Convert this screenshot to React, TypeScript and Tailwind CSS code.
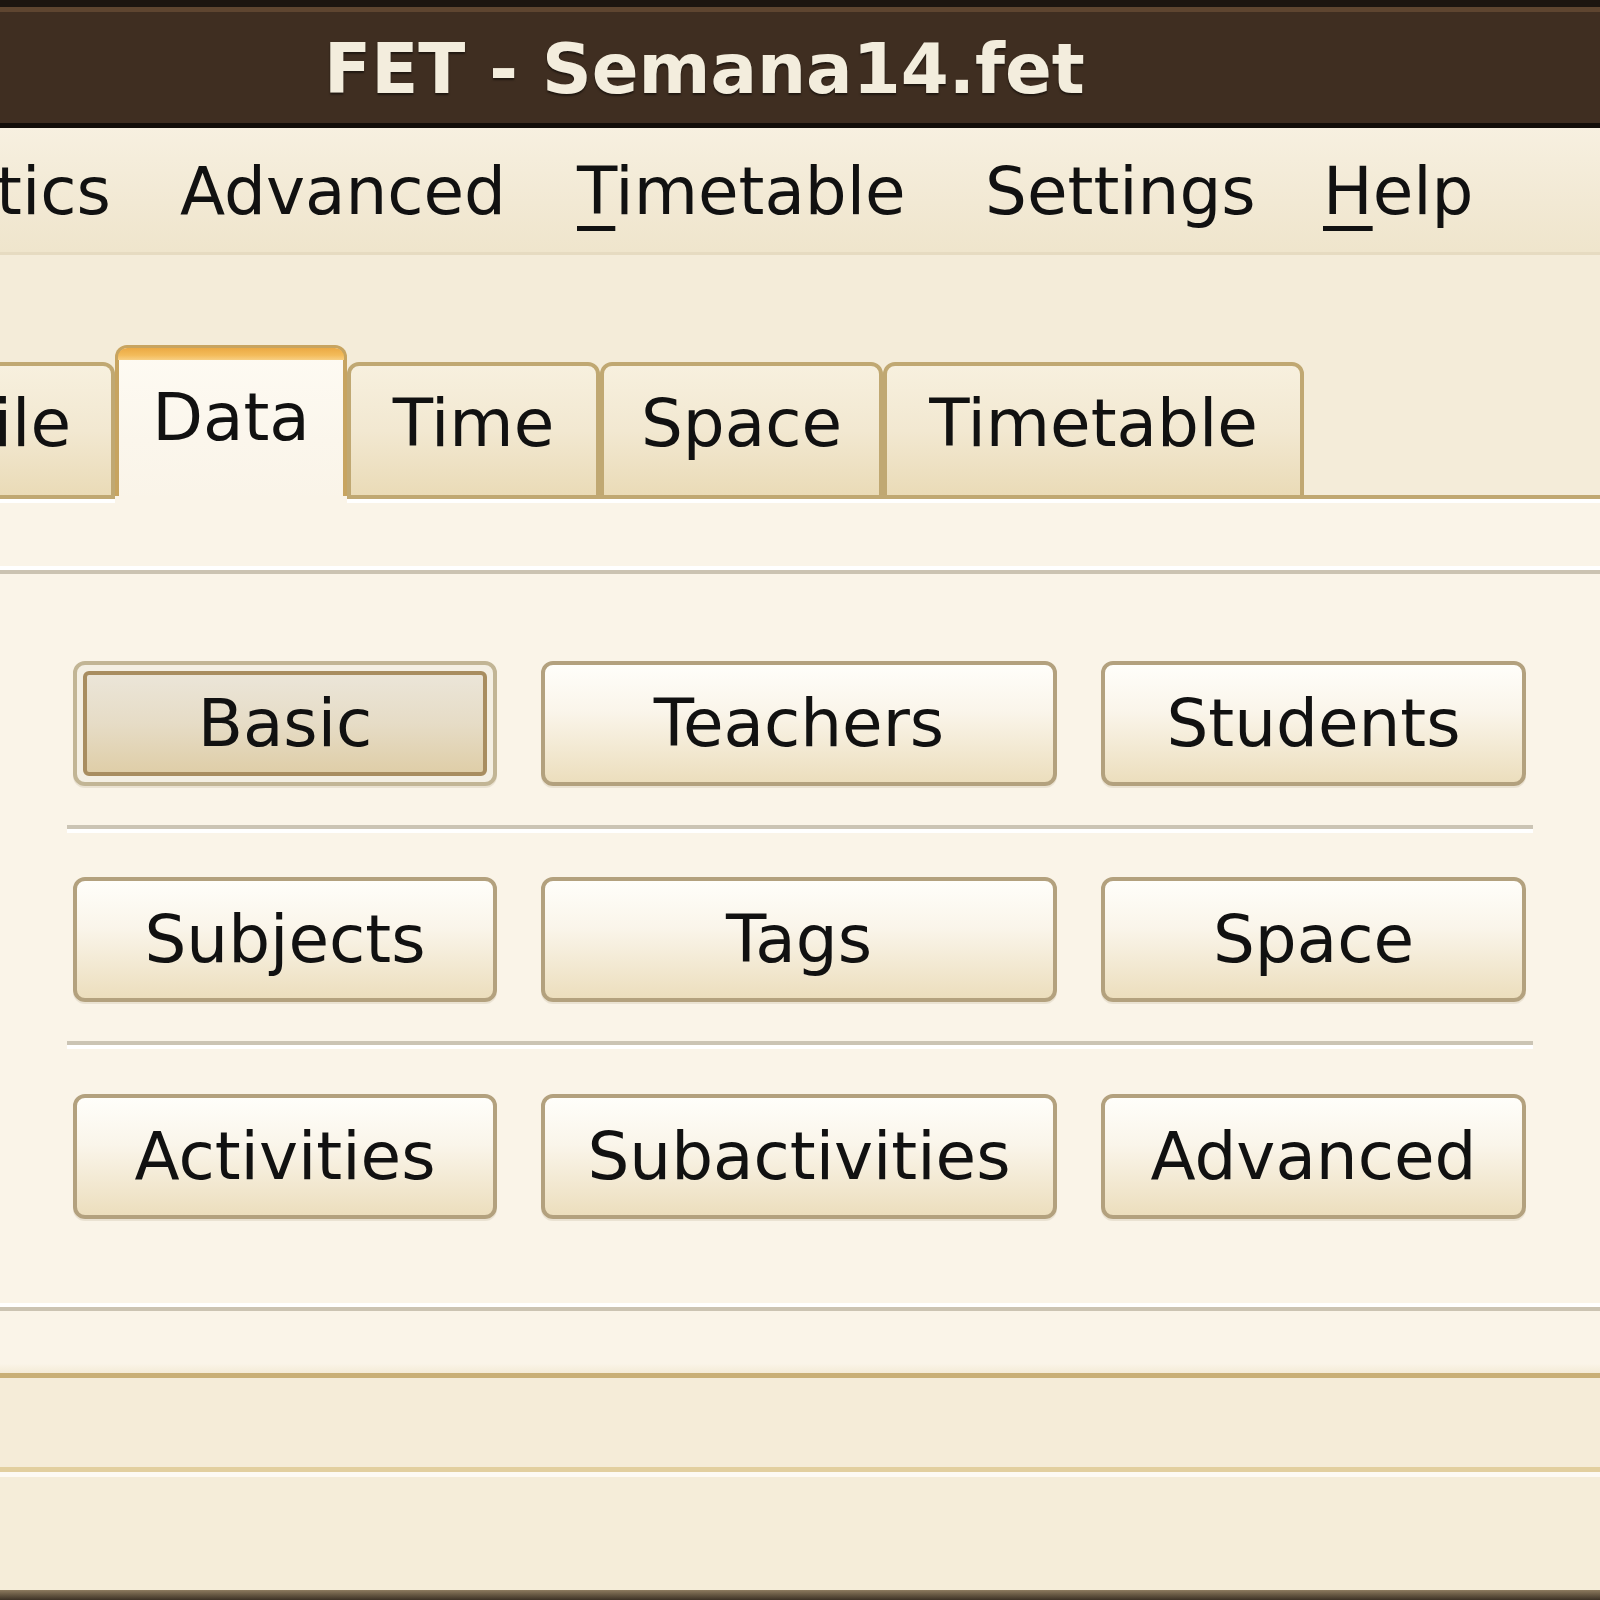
const font = "font-['DejaVu_Sans','Liberation_Sans',sans-serif]";

type ButtonProps = { label: string; focused?: boolean };

const DataButton = ({ label, focused }: ButtonProps) => {
  if (focused) {
    return (
      <div className="h-[125px] rounded-[12px] border-[4px] border-[#c2b595] bg-[#f4efe3] p-[6px] shadow-[0_2px_0_rgba(120,100,60,0.12)]">
        <div className="flex h-full items-center justify-center rounded-[6px] border-[4px] border-[#a88d60] bg-[linear-gradient(to_bottom,#ebe5d8_0%,#e6dcc6_50%,#dfcea8_100%)] text-[66px] leading-none text-[#111111]">
          {label}
        </div>
      </div>
    );
  }
  return (
    <div className="flex h-[125px] items-center justify-center rounded-[12px] border-[4px] border-[#b3a17e] bg-[linear-gradient(to_bottom,#fffefa_0%,#faf5ea_40%,#ecdebd_100%)] text-[66px] leading-none text-[#111111] shadow-[0_2px_0_rgba(120,100,60,0.12)]">
      {label}
    </div>
  );
};

const Separator = () => (
  <div className="-mx-[6px] h-[8px] border-t-[4px] border-[#cbc4b4] bg-white" />
);

const EtchedLine = () => (
  <div className="h-[8px] border-t-[4px] border-white bg-[#cbc3b2]" />
);

const tabBase =
  "flex h-[137px] items-start justify-center rounded-t-[12px] border-x-[4px] border-t-[4px] border-b-[4px] border-[#c0a872] bg-[linear-gradient(to_bottom,#f7f0de_0%,#f2e8d1_50%,#eadbb7_100%)] pt-[25px] text-[66px] leading-none text-[#111111]";

export default function App() {
  return (
    <div className={`flex h-[1600px] w-[1600px] flex-col overflow-hidden bg-[#f4ecd9] ${font}`}>
      {/* window title */}
      <div className="h-[128px] border-t-[7px] border-b-[5px] border-t-[#1c1510] border-b-[#120d09] bg-[#3f2e21]">
        <div className="h-[5px] bg-[#5e4530]" />
        <div className="pl-[324px] pt-[23px] text-[69px] font-bold leading-none text-[#f3eddd] [text-shadow:0_2px_2px_rgba(0,0,0,0.5)]">
          FET - Semana14.fet
        </div>
      </div>

      {/* menu bar */}
      <div className="flex h-[127px] border-b-[3px] border-[#e6dbc1] bg-[linear-gradient(to_bottom,#f7f0e0_0%,#f2e9d4_60%,#efe5cc_100%)] pt-[31px] text-[66px] leading-none text-[#111111]">
        <span className="-ml-[4px] w-[184px]">tics</span>
        <span className="w-[397px]">Advanced</span>
        <span className="w-[408px]">
          <span className="underline decoration-[5px] underline-offset-[12px]">T</span>imetable
        </span>
        <span className="w-[338px]">Settings</span>
        <span>
          <span className="underline decoration-[5px] underline-offset-[12px]">H</span>elp
        </span>
      </div>

      {/* tab bar */}
      <div className="mt-[90px] flex h-[154px] items-end">
        <div className="flex h-[137px] w-[115px] items-start justify-end rounded-tr-[12px] border-t-[4px] border-r-[4px] border-b-[4px] border-[#c0a872] bg-[linear-gradient(to_bottom,#f7f0de_0%,#f2e8d1_50%,#eadbb7_100%)] pr-[40px] pt-[25px] text-[66px] leading-none text-[#111111]">
          ile
        </div>
        <div className="relative z-10 -mb-[4px] flex h-[158px] w-[232px] flex-col rounded-t-[12px] border-x-[4px] border-t-[3px] border-[#c7a460] bg-[linear-gradient(to_bottom,#fefbf3_0%,#fbf6ec_60%,#faf4e8_100%)]">
          <div className="-mx-[1px] h-[12px] rounded-t-[9px] bg-[linear-gradient(to_bottom,#eba944_0%,#f3bb5a_60%,#f8cf83_100%)]" />
          <div className="flex justify-center pt-[25px] text-[66px] leading-none text-[#111111]">
            Data
          </div>
          <div className="absolute -bottom-[1px] -left-[4px] -right-[4px] h-[8px] bg-[#faf4e8]" />
        </div>
        <div className={`${tabBase} w-[253px]`}>Time</div>
        <div className={`${tabBase} w-[283px]`}>Space</div>
        <div className={`${tabBase} w-[421px]`}>Timetable</div>
        <div className="h-[4px] flex-1 bg-[#c0a872]" />
      </div>

      {/* notebook page */}
      <div className="flex h-[879px] flex-col border-t-[4px] border-b-[5px] border-t-white border-b-[#c9af76] bg-[#faf4e8]">
        <div className="h-[63px]" />
        <EtchedLine />
        <div className="flex h-[729px] flex-col pl-[73px] pt-[87px]">
          <div className="flex w-[1454px] flex-col">
            <div className="grid grid-cols-[424px_516px_425px] gap-x-[44px]">
              <DataButton label="Basic" focused />
              <DataButton label="Teachers" />
              <DataButton label="Students" />
            </div>
            <div className="mt-[39px] mb-[44px] w-[1454px]">
              <Separator />
            </div>
            <div className="grid grid-cols-[424px_516px_425px] gap-x-[44px]">
              <DataButton label="Subjects" />
              <DataButton label="Tags" />
              <DataButton label="Space" />
            </div>
            <div className="mt-[39px] mb-[45px] w-[1454px]">
              <Separator />
            </div>
            <div className="grid grid-cols-[424px_516px_425px] gap-x-[44px]">
              <DataButton label="Activities" />
              <DataButton label="Subactivities" />
              <DataButton label="Advanced" />
            </div>
          </div>
        </div>
        <EtchedLine />
        <div className="flex-1 bg-[linear-gradient(to_bottom,#faf4e8_0%,#faf4e8_85%,#f4ebd6_100%)]" />
      </div>

      {/* status area */}
      <div className="h-[89px] bg-[#f5ecd8]" />
      <div className="h-[10px] border-t-[5px] border-[#e2cf9f] bg-[#fdfaf3]" />
      <div className="h-[113px] bg-[#f5edd9]" />
      <div className="h-[10px] bg-[linear-gradient(to_bottom,#8c7a5e_0%,#3d3226_100%)]" />
    </div>
  );
}
